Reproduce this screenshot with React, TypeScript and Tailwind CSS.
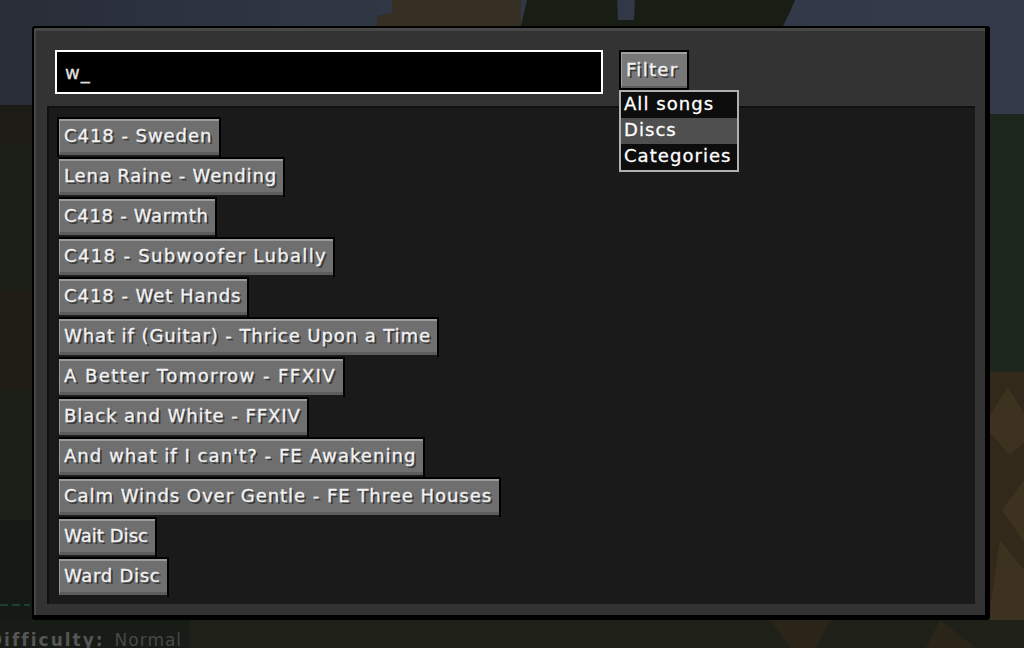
const songs = [
  { name: "C418 - Sweden", width: "w-[160px]", tracking: "tracking-[0.95px]" },
  { name: "Lena Raine - Wending", width: "w-[224px]", tracking: "tracking-[0.85px]" },
  { name: "C418 - Warmth", width: "w-[156px]", tracking: "tracking-[0.7px]" },
  { name: "C418 - Subwoofer Lubally", width: "w-[274px]", tracking: "tracking-[1.35px]" },
  { name: "C418 - Wet Hands", width: "w-[188px]", tracking: "tracking-[0.95px]" },
  { name: "What if (Guitar) - Thrice Upon a Time", width: "w-[378px]", tracking: "tracking-[0.92px]" },
  { name: "A Better Tomorrow - FFXIV", width: "w-[284px]", tracking: "tracking-[1.45px]" },
  { name: "Black and White - FFXIV", width: "w-[248px]", tracking: "tracking-[0.95px]" },
  { name: "And what if I can't? - FE Awakening", width: "w-[364px]", tracking: "tracking-[1.05px]" },
  { name: "Calm Winds Over Gentle - FE Three Houses", width: "w-[440px]", tracking: "tracking-[0.97px]" },
  { name: "Wait Disc", width: "w-[96px]", tracking: "tracking-[0.05px]" },
  { name: "Ward Disc", width: "w-[108px]", tracking: "tracking-[0.7px]" },
]

const filters = ["All songs", "Discs", "Categories"]

const font = "font-['DejaVu_Sans',sans-serif] text-[18px] whitespace-nowrap [-webkit-text-stroke:0.3px_currentColor]"

function Backdrop() {
  return (
    <svg className="absolute inset-0 w-full h-full" viewBox="0 0 1024 648" aria-hidden="true">
      <defs>
        <linearGradient id="sky" x1="0" y1="0" x2="1" y2="0">
          <stop offset="0" stopColor="#282d37" />
          <stop offset="0.3" stopColor="#2f3644" />
          <stop offset="1" stopColor="#343a49" />
        </linearGradient>
      </defs>
      <rect width="1024" height="648" fill="#1c1f1a" />
      <rect width="1024" height="115" fill="url(#sky)" />
      <rect y="105" width="34" height="40" fill="#1c1b16" />
      <rect y="145" width="34" height="375" fill="#1b1f18" />
      <rect y="290" width="34" height="100" fill="#1f1d16" />
      <rect y="520" width="34" height="128" fill="#161a14" />
      <rect x="990" y="114" width="34" height="260" fill="#1c261c" />
      <rect x="990" y="372" width="34" height="276" fill="#33291a" />
      <path d="M990 415l18-28 16 26v30l-14 12-20-22zM1024 480l-22 30 22 32zM1000 540l24 30v78h-40z" fill="#3d321f" />
      <path d="M377 26v-10l15-3V0h129v26z" fill="#352f24" />
      <path d="M521 26l6-26h90l1 20h16l1-20h160l-6 14-6 12z" fill="#191e15" />
      <rect y="620" width="190" height="28" fill="#171c17" />
      <rect x="190" y="620" width="834" height="28" fill="#1f2119" />
      <path d="M770 620l20 28h26l14-28zM940 620l-14 28h50z" fill="#2a2419" />
      <path d="M0 605h30" stroke="#2a5f5a" strokeWidth="1" strokeDasharray="8 4" />
    </svg>
  )
}

function SongButton({ name, width, tracking }: { name: string; width: string; tracking: string }) {
  return (
    <div className="border-t-2 border-r-2 border-black h-10 w-fit first:border-l-2 first:-ml-0.5 pb-0.5">
      <div className={`${width} h-full box-border bg-[#6f6f6f] border-t-2 border-l border-[#9a9a9a] border-b-[3px] border-b-[#5c5c5c] pl-1 flex items-center pb-0.5`}>
        <span className={`${font} ${tracking} text-[#f2f2f2] [text-shadow:2px_2px_0_#3a3a3a]`}>{name}</span>
      </div>
    </div>
  )
}

export default function App() {
  return (
    <div className="relative w-[1024px] h-[648px] overflow-hidden bg-[#1c1f1a]">
      <Backdrop />
      <div className="relative pt-[26px] pl-8">
        <div className="w-[958px] h-[594px] box-border bg-[#333333] border-2 border-black border-r-[5px] border-b-[5px] rounded-[3px] shadow-[inset_2px_3px_0_#474747] pt-[22px] pl-[13px] flex flex-col">
          <div className="flex gap-4 pl-2">
            <div className="w-[548px] h-11 box-border bg-black border-2 border-white flex items-center pl-2">
              <span className={`${font} tracking-[0.95px] text-[#e0e0e0]`}>w_</span>
            </div>
            <div className="relative">
              <div className="h-10 w-[70px] box-border border-2 border-black">
                <div className="h-full box-border bg-[#787878] border-t-2 border-l border-[#a0a0a0] border-b-2 border-b-[#5c5c5c] pl-1 flex items-center pb-0.5">
                  <span className={`${font} tracking-[1.3px] text-[#f2f2f2] [text-shadow:2px_2px_0_#3a3a3a]`}>Filter</span>
                </div>
              </div>
              <div className="absolute z-10 left-0 top-10 w-[120px] box-border border-2 border-[#b0b0b0]">
                {filters.map((f, i) => (
                  <div key={f} className={`h-[26px] pl-[3px] pb-1 flex items-center ${i === 1 ? "bg-[#4f4f4f]" : "bg-[#0d0d0d]"}`}>
                    <span className={`${font} tracking-[1.05px] text-white`}>{f}</span>
                  </div>
                ))}
              </div>
            </div>
          </div>
          <div className="mt-3 w-[928px] h-[498px] box-border bg-[#1a1a1a] border-t-2 border-l-2 border-[#101010] pt-[9px] pl-2.5">
            {songs.map((s) => (
              <SongButton key={s.name} name={s.name} width={s.width} tracking={s.tracking} />
            ))}
          </div>
        </div>
      </div>
      <div className="absolute -left-3 top-[630px] font-['DejaVu_Sans',sans-serif] text-[17px] leading-[20px] whitespace-nowrap text-[#454a46] flex gap-2.5">
        <span className="font-bold tracking-[2px] text-[#555555]">Difficulty:</span>
        <span className="tracking-[1px]">Normal</span>
      </div>
    </div>
  )
}
